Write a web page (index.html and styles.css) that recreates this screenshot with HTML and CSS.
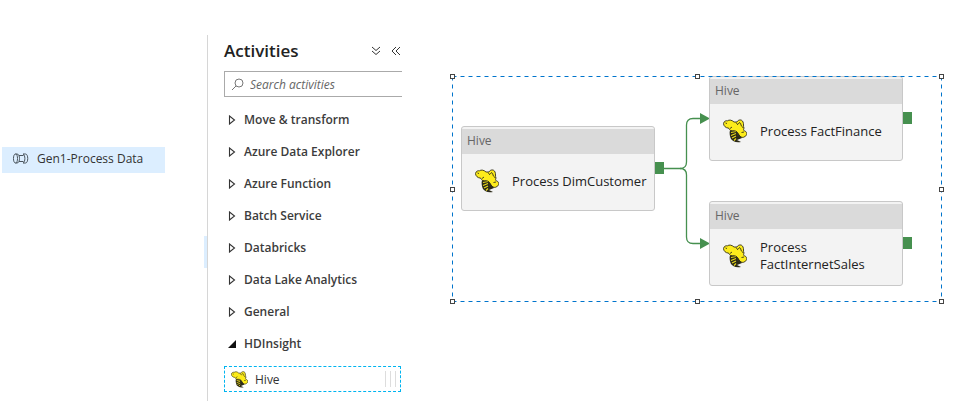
FILE: index.html
```
<!DOCTYPE html>
<html lang="en">
<head>
<meta charset="utf-8">
<meta name="viewport" content="width=device-width, initial-scale=1">
<title>Gen1-Process Data</title>
<link rel="stylesheet" href="styles.css">
</head>
<body>
<svg class="sprite" aria-hidden="true">
  <symbol id="bee" viewBox="0 0 24 24">
    <path d="M7 11 C6 14 7 18 8 20 C10 22 12 24 18 23 L14 21 L19 19 L16 12 Z" fill="#2b2918"/>
    <path d="M8 13.500 L13 12.500 M8 16.500 L13 14.500 M9 19 L13 17 M11 21.500 L13 19.500" stroke="#e8d81a" stroke-width="1.200" fill="none"/>
    <path d="M11 3 L14 3 C15 .5 19 0 20 3 C21 5 20 7 21 9 C20 11 21 12 22 12 C24 13 24.500 16 22 17.500 C20 19 18 18.500 17 17 C15 16 15 14 14 13 C12 11 10 12 7.500 11.500 C6 10.500 7 9.500 5 9 C3 9 .5 7 .5 4.500 C1 2 3 1.500 4.500 1.800 C6 .5 9 1 11 3 Z" fill="#fdec1b" stroke="#34311a" stroke-width=".9"/>
    <path d="M15.500 5 C16 3 17.500 3 18 6 C18.500 8 20 8 20.500 9 M13 3.500 L15 6 M2.500 4 L4 4.500 M7 9.500 L9 8 M18.500 13.500 L21 13" stroke="#34311a" stroke-width=".9" fill="none"/>
    <path d="M13 12 L16 15 L17.500 18 L14 17 Z" fill="#34311a"/>
  </symbol>
  <symbol id="closed" viewBox="0 0 8 10">
    <path d="M1.500 1 V9 L6.500 5 Z" fill="none" stroke="#333" stroke-width="1.100"/>
  </symbol>
  <symbol id="open" viewBox="0 0 8 8"><path d="M8 0 V8 H0 Z" fill="#111"/></symbol>
</svg>

<main class="workspace">
  <nav class="resources" aria-label="Resources">
    <a class="resource" href="#pipeline">
      <svg class="pipe" viewBox="0 0 17 12" fill="none" stroke="#4a545c" stroke-width="1">
        <path d="M3.500 1 C.8 1 .8 10 3.500 10 C6.200 10 6.200 1 3.500 1 H5 C7 1 7.500 4 7.500 5.500 C7.500 7 7 10 5 10 H3.500"/>
        <path d="M7 2.500 H11.500 M7 8.500 H11.500"/>
        <path d="M11 1 H13.500 C16.500 1 16.500 10 13.500 10 H11 C13.500 9 13.500 2 11 1 Z"/>
      </svg>
      <span>Gen1-Process Data</span>
    </a>
    <span class="splitter"></span>
  </nav>

  <section class="activities">
    <header class="panel-head">
      <h1>Activities</h1>
      <button type="button" aria-label="Expand all"><svg viewBox="0 0 10 10"><path d="M1 1 L5 4.500 L9 1 M1 5 L5 8.500 L9 5"/></svg></button>
      <button type="button" aria-label="Collapse panel"><svg viewBox="0 0 10 10"><path d="M5 1 L1 5 L5 9 M9 1 L5 5 L9 9"/></svg></button>
    </header>
    <label class="search">
      <svg viewBox="0 0 13 13"><circle cx="8" cy="5" r="4"/><path d="M5 8 L1 12"/></svg>
      <input type="text" placeholder="Search activities" aria-label="Search activities">
    </label>
    <ul class="groups">
      <li><button type="button"><svg><use href="#closed"/></svg>Move &amp; transform</button></li>
      <li><button type="button"><svg><use href="#closed"/></svg>Azure Data Explorer</button></li>
      <li><button type="button"><svg><use href="#closed"/></svg>Azure Function</button></li>
      <li><button type="button"><svg><use href="#closed"/></svg>Batch Service</button></li>
      <li><button type="button"><svg><use href="#closed"/></svg>Databricks</button></li>
      <li><button type="button"><svg><use href="#closed"/></svg>Data Lake Analytics</button></li>
      <li><button type="button"><svg><use href="#closed"/></svg>General</button></li>
      <li><button type="button" aria-expanded="true"><svg><use href="#open"/></svg>HDInsight</button></li>
    </ul>
    <button type="button" class="activity">
      <svg><use href="#bee"/></svg>
      <span>Hive</span>
      <i class="grip"></i>
    </button>
  </section>

  <section class="canvas" id="pipeline" aria-label="Pipeline canvas">
    <svg class="links" viewBox="0 0 60 140" fill="none" stroke="#46904f">
      <path d="M0 57.500 H20 Q26.500 57.500 26.500 51 V14 Q26.500 7.500 33 7.500 H42" stroke-width="1.300"/>
      <path d="M20 57.500 Q26.500 57.500 26.500 64 V126 Q26.500 132.500 33 132.500 H42" stroke-width="1.300"/>
      <path d="M40 2 L50 7.500 L40 13 Z M40 127 L50 132.500 L40 138 Z" fill="#46904f" stroke="none"/>
    </svg>
    <article class="node customer">
      <h2>Hive</h2>
      <div class="node-body"><svg><use href="#bee"/></svg><span>Process DimCustomer</span></div>
      <i class="port"></i>
    </article>
    <article class="node finance">
      <h2>Hive</h2>
      <div class="node-body"><svg><use href="#bee"/></svg><span>Process FactFinance</span></div>
      <i class="port"></i>
    </article>
    <article class="node sales">
      <h2>Hive</h2>
      <div class="node-body"><svg><use href="#bee"/></svg><span>Process FactInternetSales</span></div>
      <i class="port"></i>
    </article>
    <svg class="selection" viewBox="0 0 496 232" fill="none">
      <path d="M3.500 3.500 H492.500 M3.500 228.500 H492.500 M3.500 3.500 V228.500 M492.500 3.500 V228.500" stroke="#0074cc" stroke-dasharray="4 4"/>
      <g fill="#fff" stroke="#444">
        <rect x="1.500" y="1.500" width="4" height="4"/><rect x="246.500" y="1.500" width="4" height="4"/><rect x="490.500" y="1.500" width="4" height="4"/>
        <rect x="1.500" y="114.500" width="4" height="4"/><rect x="490.500" y="114.500" width="4" height="4"/>
        <rect x="1.500" y="226.500" width="4" height="4"/><rect x="246.500" y="226.500" width="4" height="4"/><rect x="490.500" y="226.500" width="4" height="4"/>
      </g>
    </svg>
  </section>
</main>
</body>
</html>
```
FILE: styles.css
```
* { box-sizing: border-box; }
body {
  margin: 0;
  background: #fff;
  color: #333;
  font: 12px/16px "Open Sans", "Noto Sans", sans-serif;
}
button {
  padding: 0;
  border: 0;
  background: none;
  color: inherit;
  font: inherit;
  text-align: left;
}
.sprite { position: absolute; width: 0; height: 0; }
.workspace { display: flex; min-height: 100vh; }

.resources {
  position: relative;
  flex: 0 0 207px;
  padding: 147px 42px 0 2px;
}
.resource {
  display: flex;
  align-items: center;
  gap: 8px;
  height: 26px;
  padding: 0 10px 2px;
  background: #dceeff;
  color: #333;
  text-decoration: none;
}
.pipe { width: 17px; height: 12px; }
.splitter {
  position: absolute;
  top: 236px;
  right: 0;
  width: 3px;
  height: 32px;
  background: #dceeff;
}

.activities {
  flex: 0 0 195px;
  margin-top: 35px;
  padding-left: 16px;
  border-left: 1px solid #d6d6d6;
}
.panel-head {
  display: flex;
  align-items: center;
  gap: 10px;
  height: 32px;
}
h1 {
  flex: 1;
  margin: 0;
  color: #222;
  font-size: 17px;
  font-weight: 600;
}
.panel-head button { height: 10px; }
.panel-head button:last-child { margin-right: 1px; }
.panel-head svg {
  display: block;
  width: 10px;
  height: 10px;
  fill: none;
  stroke: #333;
}
.search {
  display: flex;
  align-items: center;
  gap: 6px;
  height: 26px;
  margin-top: 4px;
  padding-left: 6px;
  border: 1px solid #aaa;
  border-right: 0;
}
.search svg { flex: none; width: 13px; height: 13px; fill: none; stroke: #777; }
.search input {
  width: 100%;
  min-width: 0;
  padding: 1px 0 0;
  border: 0;
  outline: 0;
  font: italic 12px/16px "Open Sans", "Noto Sans", sans-serif;
}
.search input::placeholder { color: #666; opacity: 1; }
.groups { margin: 7px 0 0; padding: 0; list-style: none; }
.groups button {
  display: flex;
  align-items: center;
  gap: 8px;
  width: 100%;
  height: 32px;
  padding-left: 4px;
  color: #3c3c3c;
  font-weight: 600;
}
.groups svg { width: 8px; height: 10px; }
.activity {
  display: flex;
  align-items: center;
  gap: 7px;
  width: 177px;
  height: 26px;
  margin-top: 6px;
  padding: 0 4px 0 6px;
  border: 1px dashed #00b4f0;
}
.activity svg { width: 17px; height: 17px; }
.activity span { padding-top: 1px; }
.grip {
  width: 11px;
  height: 16px;
  margin-left: auto;
  border: solid #ddd;
  border-width: 0 1px;
  background: linear-gradient(#ddd, #ddd) center / 1px 100% no-repeat;
}

.canvas { position: relative; flex: 1; min-width: 553px; }
.node {
  position: absolute;
  width: 194px;
  height: 85px;
  padding-top: 2px;
  border: 1px solid #c8c8c8;
  border-radius: 3px;
  background: #f3f3f3;
}
.customer { left: 59px; top: 126px; }
.finance { left: 307px; top: 76px; }
.sales { left: 307px; top: 201px; }
.node h2 {
  height: 25px;
  margin: 0;
  padding-left: 5px;
  background: #dadada;
  color: #666;
  font-size: 12px;
  font-weight: 400;
  line-height: 24px;
}
.node-body {
  display: flex;
  align-items: center;
  gap: 13px;
  height: 54px;
  padding-left: 13px;
  color: #222;
  font-size: 13px;
  line-height: 17px;
}
.node-body svg { flex: none; width: 24px; height: 24px; }
.port {
  position: absolute;
  top: 35px;
  right: -10px;
  width: 9px;
  height: 12px;
  background: #46904f;
}
.links { position: absolute; left: 258px; top: 111px; width: 60px; height: 140px; }
.selection { position: absolute; left: 47px; top: 73px; width: 496px; height: 232px; }
```
